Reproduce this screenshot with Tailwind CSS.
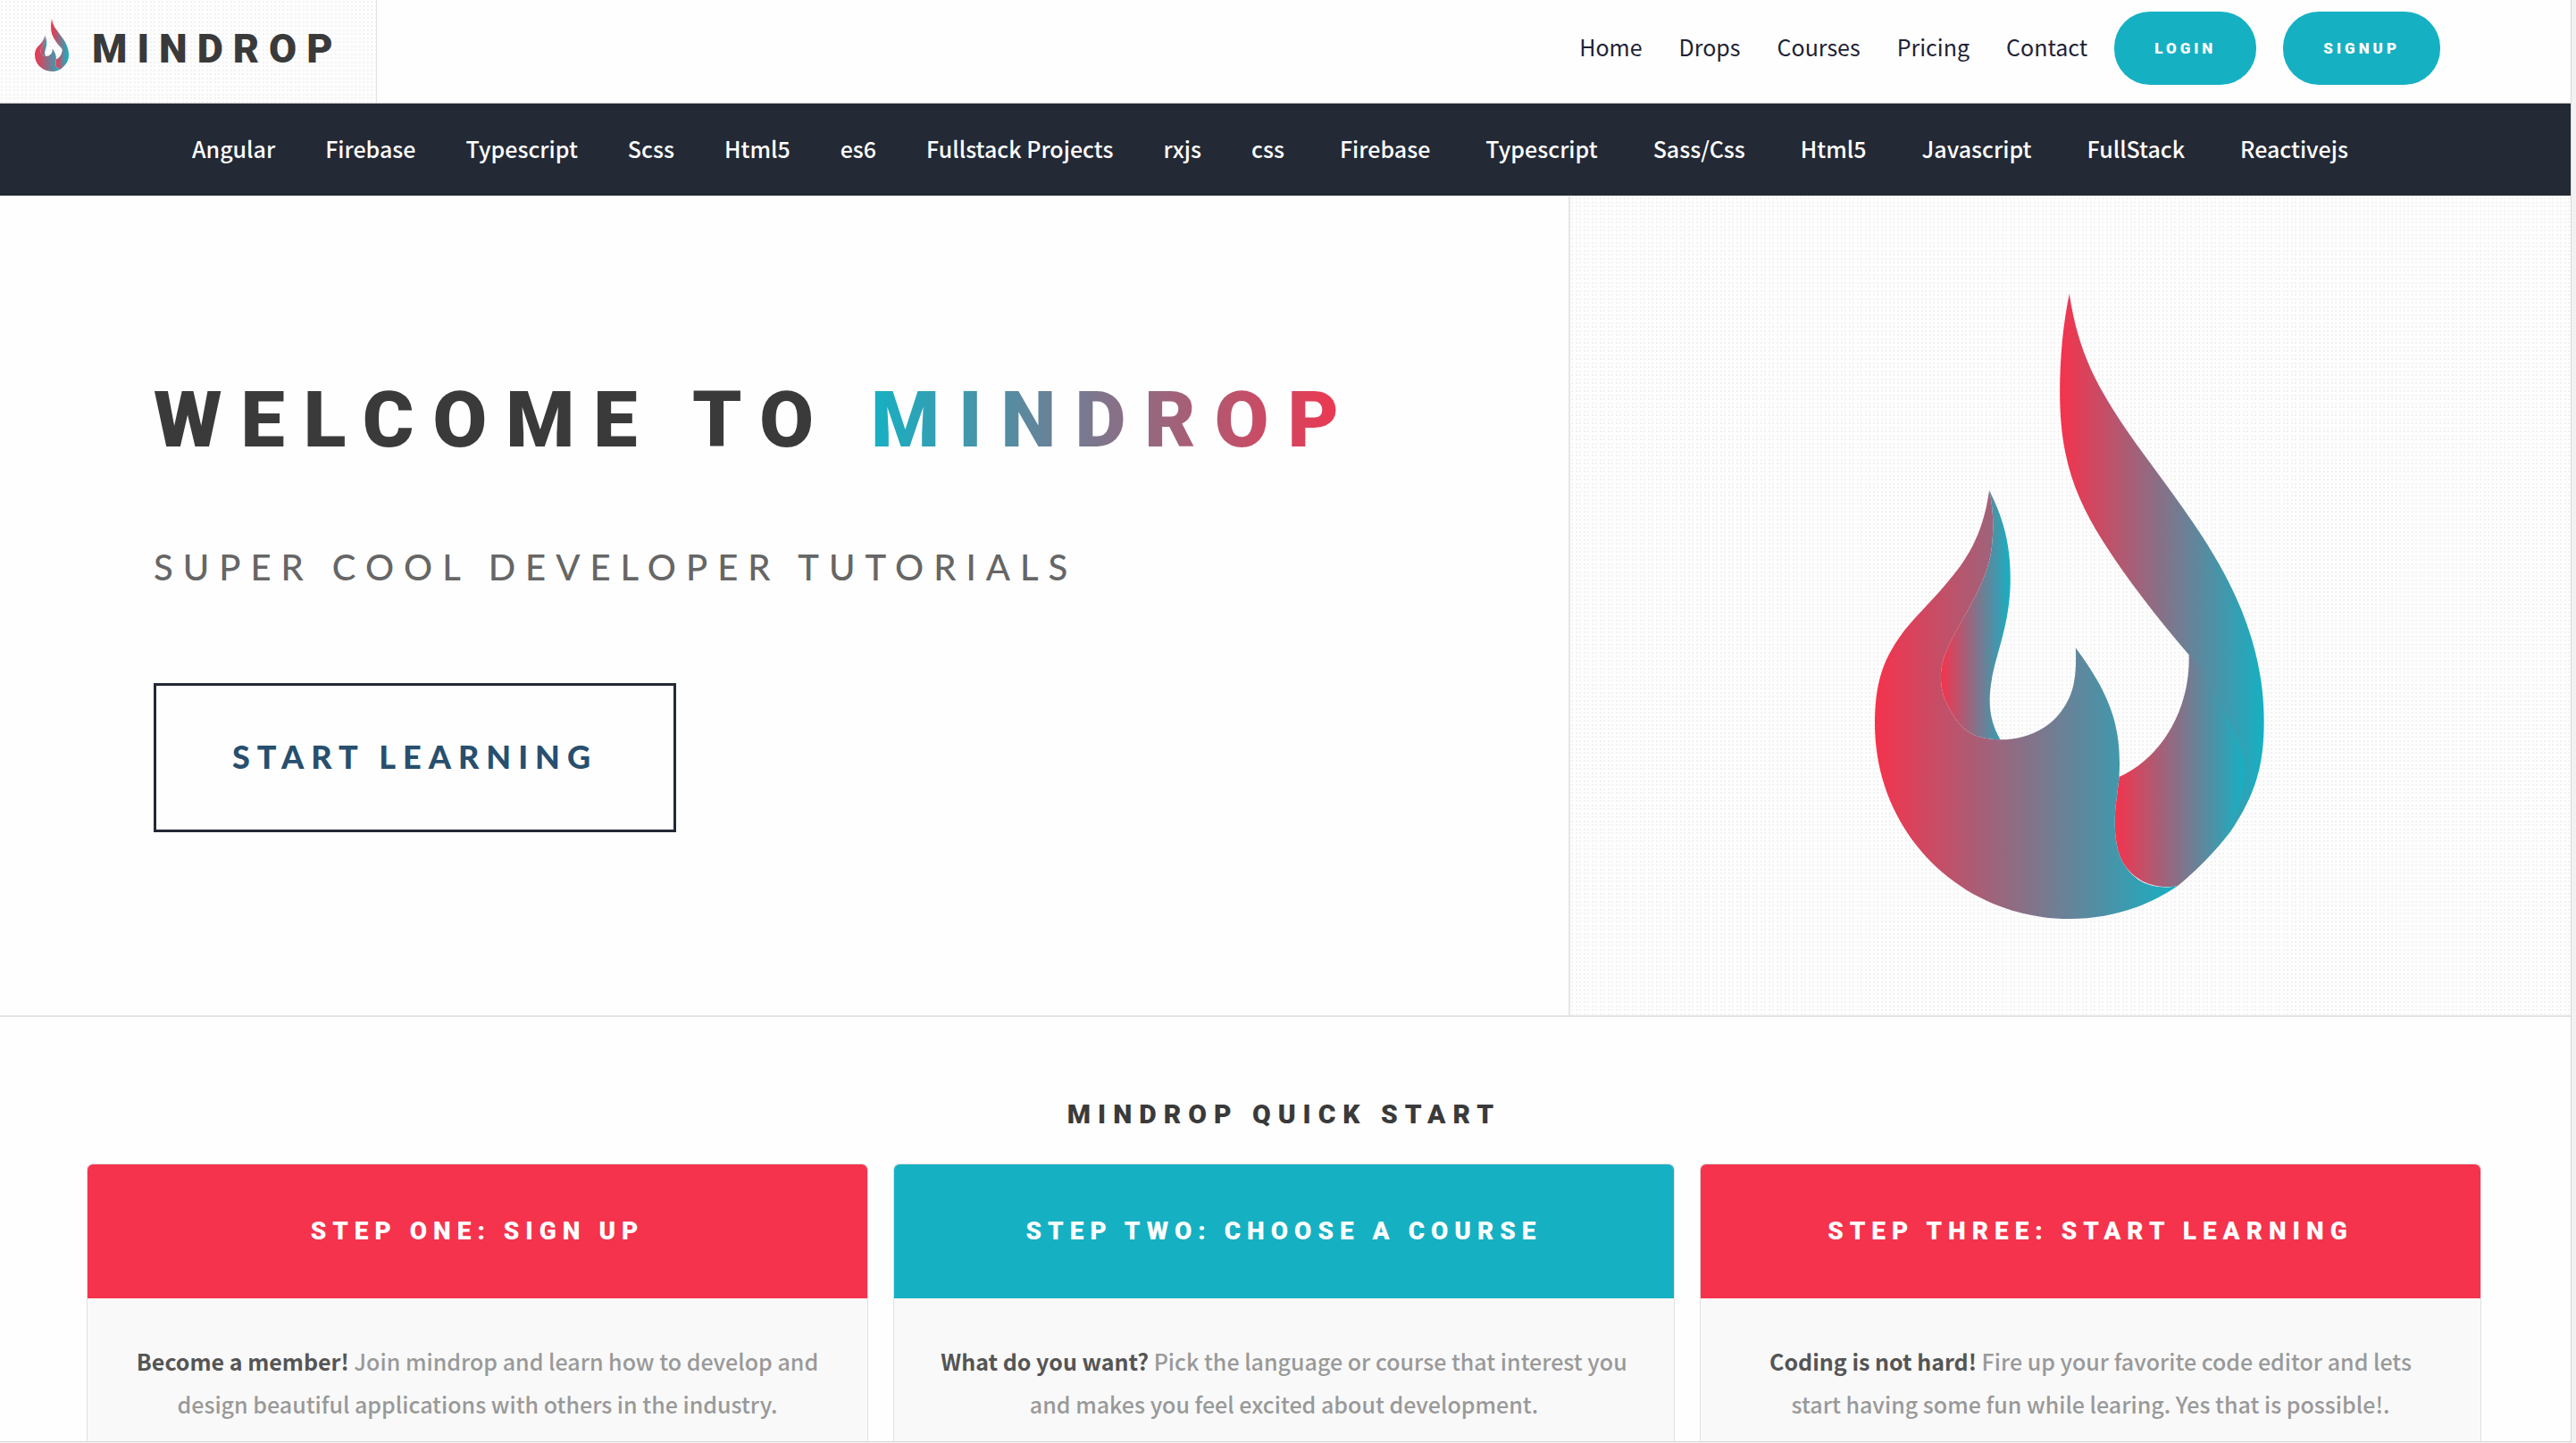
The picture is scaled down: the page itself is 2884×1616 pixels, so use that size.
<!DOCTYPE html>
<html lang="en">
<head>
<meta charset="utf-8">
<meta name="viewport" content="width=device-width, initial-scale=1">
<title>Mindrop</title>
<script src="https://cdn.jsdelivr.net/npm/@tailwindcss/browser@4"></script>
</head>
<body class="flex h-screen overflow-hidden bg-[#f2f2f2] pr-[5px] pb-px font-['Noto_Sans_CJK_SC',sans-serif]">
<svg class="absolute size-0" aria-hidden="true">
  <defs>
    <linearGradient id="ember"><stop offset="0" stop-color="#f5334d"/><stop offset="1" stop-color="#16b0c3"/></linearGradient>
    <symbol id="flame" viewBox="118 62 1307 1444" preserveAspectRatio="none">
      <g fill="url(#ember)">
        <path d="M771 62C800 200 872 278 920 332C1005 424 1110 512 1195 600C1330 738 1424 880 1424 1050C1424 1152 1395 1220 1310 1306C1300 1200 1240 1000 1172 896C1060 806 960 718 880 630C790 530 739 440 739 290C739 210 750 130 771 62Z"/>
        <path d="M1172 896C1230 935 1345 1075 1357 1150C1362 1195 1345 1250 1310 1306C1260 1350 1200 1394 1134 1430C1040 1440 980 1410 950 1375C918 1335 920 1270 930 1225C934 1205 936 1192 938 1178C1080 1135 1178 1020 1172 896Z"/>
        <path d="M118 1055C118 970 140 915 200 856C245 812 300 780 360 730C420 682 480 625 502 516C516 560 518 600 510 650C490 755 375 835 345 915C335 945 338 980 360 1010C405 1070 440 1090 539 1092C620 1092 695 1070 740 1030C785 990 796 950 792 880C905 985 948 1060 938 1178C936 1192 934 1205 930 1225C920 1270 918 1335 950 1375C980 1410 1030 1442 1134 1430C1030 1478 910 1506 771 1506C410 1506 118 1310 118 1055Z"/>
        <path d="M502 516C556 590 573 650 573 720C573 825 525 890 510 955C496 1010 505 1050 539 1092C440 1090 405 1070 360 1010C338 980 335 945 345 915C375 835 490 755 510 650C518 600 516 560 502 516Z"/>
      </g>
    </symbol>
  </defs>
</svg>

<div class="min-h-0 flex-1 overflow-hidden border-r border-b border-[#d8d8d8] bg-[#fefefe]">
  <header class="flex h-[116px] items-start justify-between border-b border-[#ccc]">
    <a href="#" class="flex h-full w-[422px] items-start gap-[26px] border-r border-[#e3e3e3] bg-[radial-gradient(circle_at_2px_2px,#f2f2f2_1px,transparent_1px),radial-gradient(circle_at_7px_2px,#f2f2f2_1px,transparent_1px),radial-gradient(circle_at_2px_7px,#f2f2f2_1px,transparent_1px),radial-gradient(circle_at_7px_7px,#f2f2f2_1px,transparent_1px)] bg-size-[9px_9px] pl-[39px]">
      <svg class="mt-[21px] h-[59px] w-[38px]" role="img" aria-label="Flame"><use href="#flame"/></svg>
      <span class="mt-[27px] font-[Roboto] text-[45px] leading-[56px] font-black tracking-[11px] text-[#3a3a3a]">MINDROP</span>
    </a>
    <nav class="flex items-center pt-[13px] pr-[146px] text-[25px] leading-[40px] text-[#1f2235]">
      <div class="flex gap-[41px] pb-1">
        <a href="#">Home</a>
        <a href="#">Drops</a>
        <a href="#">Courses</a>
        <a href="#">Pricing</a>
        <a href="#">Contact</a>
      </div>
      <div class="ml-[30px] flex gap-[30px] font-[Roboto] text-[17px] font-black text-white">
        <button class="rounded-[40px] bg-[#16b0c3] px-[45px] py-[21px] tracking-[4px]">LOGIN</button>
        <button class="rounded-[40px] bg-[#16b0c3] px-[45px] py-[21px] tracking-[4px]">SIGNUP</button>
      </div>
    </nav>
  </header>

  <nav class="flex h-[103px] items-center gap-[62px] bg-[#232935] pb-[2px] pl-[215px] text-[25px] font-medium whitespace-nowrap text-white">
    <div class="flex gap-[56px]">
      <a href="#">Angular</a>
      <a href="#">Firebase</a>
      <a href="#">Typescript</a>
      <a href="#">Scss</a>
      <a href="#">Html5</a>
      <a href="#">es6</a>
      <a href="#">Fullstack Projects</a>
      <a href="#">rxjs</a>
      <a href="#">css</a>
    </div>
    <div class="flex gap-[62px]">
      <a href="#">Firebase</a>
      <a href="#">Typescript</a>
      <a href="#">Sass/Css</a>
      <a href="#">Html5</a>
      <a href="#">Javascript</a>
      <a href="#">FullStack</a>
      <a href="#">Reactivejs</a>
    </div>
  </nav>

  <section class="flex h-[920px] border-t border-b-2 border-[#e3e3e3]">
    <div class="w-[61%] pt-[198px] pl-[172px] whitespace-nowrap">
      <h1 class="font-[Roboto] text-[88px] leading-[104px] font-black tracking-[21px] text-[#3a3a3a]">WELCOME TO <span class="bg-linear-to-r/srgb from-[#16b0c3] to-[#f5334d] bg-clip-text text-transparent">MINDROP</span></h1>
      <p class="mt-[89px] font-[Lato] text-[40px] leading-[48px] font-medium tracking-[11px] text-[#666]">SUPER COOL DEVELOPER TUTORIALS</p>
      <button class="mt-[106px] border-3 border-[#232935] px-[85px] pt-[57px] pb-[59px] font-[Lato] text-[36px] leading-[45px] font-black tracking-[8px] text-[#284f6e]">START LEARNING</button>
    </div>
    <div class="flex flex-1 items-center justify-center border-l-2 border-[#e6e6e6] bg-[radial-gradient(circle_at_2px_2px,#f2f2f2_1px,transparent_1px),radial-gradient(circle_at_7px_2px,#f2f2f2_1px,transparent_1px),radial-gradient(circle_at_2px_7px,#f2f2f2_1px,transparent_1px),radial-gradient(circle_at_7px_7px,#f2f2f2_1px,transparent_1px)] bg-size-[9px_9px] pr-0.5">
      <svg class="h-[700px] w-[436px]" role="img" aria-label="Mindrop flame"><use href="#flame"/></svg>
    </div>
  </section>

  <section class="pt-[89px] pr-[100px] pl-[97px] text-center">
    <h2 class="mb-[35px] font-[Roboto] text-[30px] leading-[40px] font-black tracking-[8px] text-[#3a3a3a]">MINDROP QUICK START</h2>
    <div class="grid grid-cols-3 gap-7">
      <article class="rounded-md border border-[#e0e0e0] bg-[#f9f9f9]">
        <h3 class="rounded-t-md bg-[#f5334d] font-[Roboto] text-[28px] leading-[150px] font-black tracking-[7px] text-white">STEP ONE: SIGN UP</h3>
        <p class="px-12 pt-[46px] pb-16 text-[25px] leading-[48px] font-medium text-[#999]"><strong class="font-bold text-[#555]">Become a member!</strong> Join mindrop and learn how to develop and design beautiful applications with others in the industry.</p>
      </article>
      <article class="rounded-md border border-[#e0e0e0] bg-[#f9f9f9]">
        <h3 class="rounded-t-md bg-[#16b0c3] font-[Roboto] text-[28px] leading-[150px] font-black tracking-[7px] text-white">STEP TWO: CHOOSE A COURSE</h3>
        <p class="px-12 pt-[46px] pb-16 text-[25px] leading-[48px] font-medium text-[#999]"><strong class="font-bold text-[#555]">What do you want?</strong> Pick the language or course that interest you and makes you feel excited about development.</p>
      </article>
      <article class="rounded-md border border-[#e0e0e0] bg-[#f9f9f9]">
        <h3 class="rounded-t-md bg-[#f5334d] font-[Roboto] text-[28px] leading-[150px] font-black tracking-[7px] text-white">STEP THREE: START LEARNING</h3>
        <p class="px-12 pt-[46px] pb-16 text-[25px] leading-[48px] font-medium text-[#999]"><strong class="font-bold text-[#555]">Coding is not hard!</strong> Fire up your favorite code editor and lets start having some fun while learing. Yes that is possible!.</p>
      </article>
    </div>
  </section>
</div>
</body>
</html>
